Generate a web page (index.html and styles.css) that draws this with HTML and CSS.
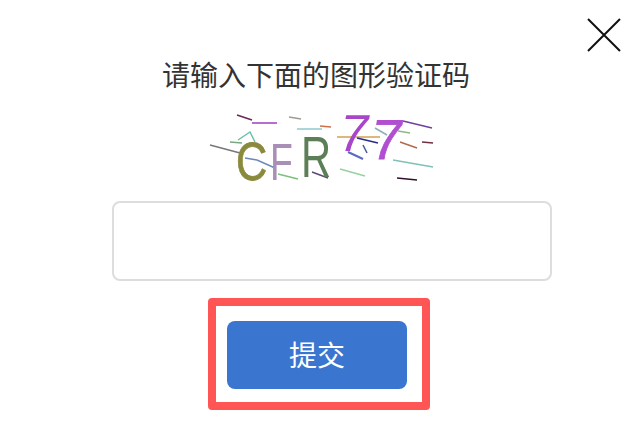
FILE: index.html
```html
<!DOCTYPE html>
<html>
<head>
    <meta charset="UTF-8">
    <title>图形验证码</title>
    <link rel="stylesheet" href="styles.css">
</head>
<body>
    <div class="dialog">
        <div class="close-row">
            <svg class="close-icon" width="34" height="34" viewBox="0 0 34 34">
                <path d="M1 1 L33 33 M33 1 L1 33" stroke="#111" stroke-width="2" fill="none"/>
            </svg>
        </div>
        <h1 class="title">请输入下面的图形验证码</h1>
        <svg class="captcha" width="226" height="68" viewBox="0 0 226 68">
            <g fill="none" stroke-width="1.5">
                <path d="M28 1 L43 6" stroke="#6a2a50"/>
                <path d="M43 9 L68 9" stroke="#a03cc0"/>
                <path d="M80 3 L92 5" stroke="#a09a90"/>
                <path d="M88 15 L113 15" stroke="#8fc8d0"/>
                <path d="M111 12 L122 13" stroke="#d0704a"/>
                <path d="M1 31 L31 39" stroke="#777"/>
                <path d="M21 28 L33 29" stroke="#7aa880"/>
                <path d="M29 26 L41 18 L46 28" stroke="#6cc0a8"/>
                <path d="M36 44 L48 46 L66 54" stroke="#6a8ab8"/>
                <path d="M69 60 L89 65" stroke="#7ac07a"/>
                <path d="M103 58 L119 64" stroke="#5a4a7a"/>
                <path d="M131 55 L156 62" stroke="#9ad0a0"/>
                <path d="M128 23 L171 23" stroke="#d0a050"/>
                <path d="M148 24 L169 29" stroke="#2a2a8a"/>
                <path d="M154 31 L158 39" stroke="#4a5a9a"/>
                <path d="M139 38 L154 45" stroke="#5a6ac0" stroke-width="2"/>
                <path d="M166 14 L178 21" stroke="#8ab0b8"/>
                <path d="M194 7 L223 14" stroke="#7040a0"/>
                <path d="M189 17 L201 19" stroke="#90b880"/>
                <path d="M191 28 L208 34" stroke="#b06a50"/>
                <path d="M213 28 L224 29" stroke="#703040"/>
                <path d="M184 46 L224 53" stroke="#80c0b8"/>
                <path d="M188 64 L208 66" stroke="#301030"/>
            </g>
            <g class="captcha-text">
                <text font-size="54" fill="#8a8a3c" stroke="#8a8a3c" stroke-width=".8" transform="translate(27 66) scale(.8 1)">C</text>
                <text font-size="52" fill="#a98fb8" transform="translate(61 66) scale(.72 1)">F</text>
                <text font-size="58" fill="#5c7f58" transform="translate(92 63) scale(.72 1)">R</text>
                <text font-size="52" fill="#a945c9" transform="translate(127 37) skewX(-12)">7</text>
                <text font-size="56" fill="#b04fd0" stroke="#b04fd0" stroke-width=".8" transform="translate(160 45) skewX(-8)">7</text>
            </g>
        </svg>
        <input class="code-input" type="text">
        <div class="highlight">
            <button class="submit">提交</button>
        </div>
    </div>
</body>
</html>
```

FILE: styles.css
```css
body {
    margin: 0;
    background: #fff;
    font-family: "Noto Sans CJK SC", "Liberation Sans", sans-serif;
}

.dialog {
    display: flex;
    flex-direction: column;
    align-items: flex-start;
    width: 640px;
    height: 432px;
    overflow: hidden;
}

.close-row {
    display: flex;
    justify-content: flex-end;
    width: 100%;
    height: 53px;
    padding: 18px 19px 0 0;
    box-sizing: border-box;
}

.title {
    margin: 0 0 0 162px;
    height: 61px;
    line-height: 42px;
    font-size: 28px;
    font-weight: 400;
    color: #333;
}

.captcha {
    margin-left: 209px;
    height: 68px;
    overflow: visible;
    filter: blur(0.4px);
}

.captcha-text {
    font-family: "Liberation Sans", sans-serif;
}

.code-input {
    margin: 19px 0 0 112px;
    width: 440px;
    height: 80px;
    box-sizing: border-box;
    border: 2px solid #ddd;
    border-radius: 8px;
    background: #fff;
}

.highlight {
    display: flex;
    align-items: center;
    margin: 17px 0 0 208px;
    width: 222px;
    height: 112px;
    padding: 2px 0 0 11px;
    box-sizing: border-box;
    border: 8px solid #ff5555;
    border-radius: 4px;
}

.submit {
    width: 180px;
    height: 68px;
    border: none;
    border-radius: 8px;
    background: #3a76cf;
    color: #fff;
    font-family: inherit;
    font-size: 28px;
    padding: 0 0 2px;
}
```
